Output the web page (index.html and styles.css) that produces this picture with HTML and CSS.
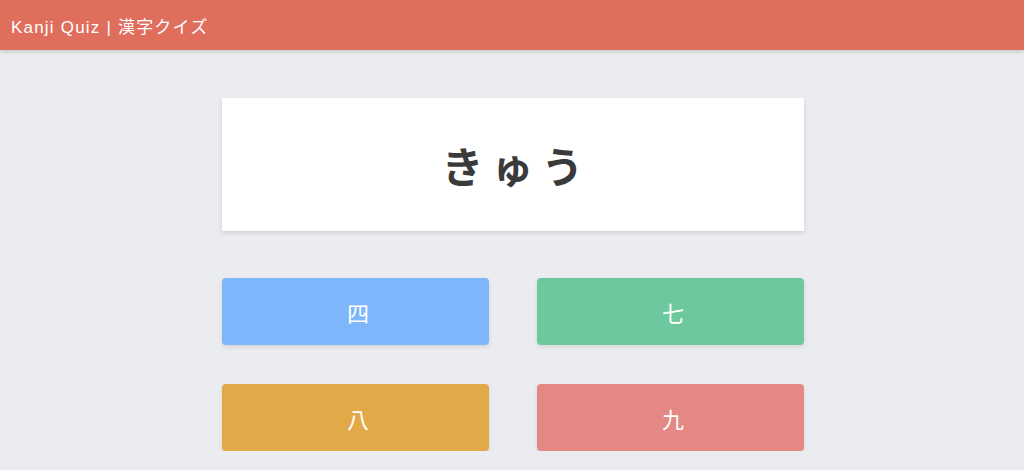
FILE: index.html
```html
<!DOCTYPE html>
<html lang="ja">
<head>
    <meta charset="UTF-8">
    <meta name="viewport" content="width=device-width, initial-scale=1.0">
    <title>Kanji Quiz | 漢字クイズ</title>
    <link rel="stylesheet" href="styles.css">
</head>
<body>
    <header class="topbar">
        <span class="title">Kanji Quiz | 漢字クイズ</span>
    </header>

    <main class="quiz">
        <div class="question">
            <span class="reading">きゅう</span>
        </div>

        <div class="answers">
            <button class="answer blue">四</button>
            <button class="answer green">七</button>
            <button class="answer orange">八</button>
            <button class="answer red">九</button>
        </div>
    </main>
</body>
</html>
```

FILE: styles.css
```css
body {
    font-family: "Liberation Sans", "Noto Sans CJK JP", sans-serif;
    background-color: #ebecf0;
    margin: 0;
    padding: 0;
}
.topbar {
    height: 50px;
    background-color: #df6e5d;
    box-shadow: 0 2px 4px rgba(0, 0, 0, 0.15);
    display: flex;
    align-items: center;
    padding: 0 11px;
}
.title {
    color: #fff;
    font-size: 17px;
    letter-spacing: 1.2px;
}
.quiz {
    width: 582px;
    margin: 48px auto 0;
    padding-left: 1px;
}
.question {
    height: 133px;
    background-color: #fff;
    box-shadow: 0 2px 4px rgba(0, 0, 0, 0.12);
    display: flex;
    align-items: center;
    justify-content: center;
}
.reading {
    font-family: "Noto Sans CJK JP", sans-serif;
    font-size: 42px;
    font-weight: bold;
    color: #3a3a3a;
    letter-spacing: 8px;
    margin-right: -8px;
}
.answers {
    display: grid;
    grid-template-columns: 1fr 1fr;
    column-gap: 48px;
    row-gap: 39px;
    margin-top: 47px;
}
.answer {
    height: 67px;
    border: none;
    border-radius: 4px;
    box-shadow: 0 2px 4px rgba(0, 0, 0, 0.1);
    color: #fff;
    font-family: "Noto Sans CJK JP", sans-serif;
    font-size: 22px;
    padding: 0 0 0 6px;
    cursor: pointer;
}
.blue {
    background-color: #7db6fa;
}
.green {
    background-color: #6dc99d;
}
.orange {
    background-color: #e2a948;
}
.red {
    background-color: #e48883;
}
```
